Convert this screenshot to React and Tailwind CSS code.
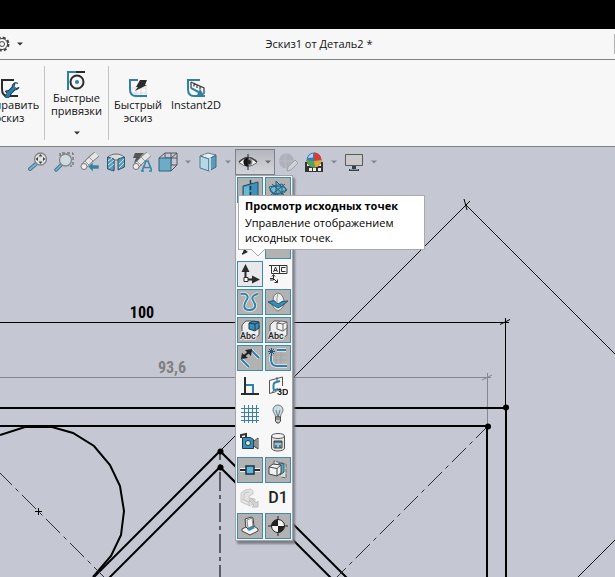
import clsx from 'clsx'

const BLUE = '#2f7fa6'
const DARK = '#2b2b2b'

function Icon({ children, className }) {
  return (
    <svg
      viewBox="0 0 20 20"
      aria-hidden="true"
      className={clsx('h-5 w-5 shrink-0', className)}
      fill="none"
    >
      {children}
    </svg>
  )
}

function Caret({ className }) {
  return (
    <svg viewBox="0 0 8 8" aria-hidden="true" className={clsx('h-2 w-2 shrink-0', className)}>
      <path d="M1 2.5h6L4 5.5z" fill="currentColor" />
    </svg>
  )
}

/* ---------- ribbon ---------- */

const RepairIcon = () => (
  <Icon>
    <path d="M14 2H2v9c0 5 2 7 6 7h10" stroke={DARK} strokeWidth="2" />
    <path d="M8 16l6-6" stroke="#16384c" strokeWidth="5" />
    <path d="M18 5.5a3.5 3.5 0 1 0 1 4l-3 1-2-2 1-3" fill={BLUE} stroke="#16384c" />
    <path d="M4 17.5a3.5 3.5 0 1 0 1-4l2 1v2l-2 1z" fill={BLUE} stroke="#16384c" />
    <path d="M7 17l8-8" stroke={BLUE} strokeWidth="3" />
  </Icon>
)

const SnapsIcon = () => (
  <Icon>
    <path d="M1 19V1M0 1h18" stroke={BLUE} strokeWidth="2" />
    <path d="M9 1h9" stroke={DARK} strokeWidth="2" />
    <circle cx="10" cy="11" r="6.5" stroke={DARK} strokeWidth="2" />
    <circle cx="10" cy="11" r="2" fill={BLUE} />
  </Icon>
)

const RapidIcon = () => (
  <Icon>
    <path d="M8 8v12M13 8v12M18 8v12M3 10h16M3 15h16" stroke="#dcdcdc" />
    <path d="M10 2H2v9c0 5 2 7 6 7h11" stroke={BLUE} strokeWidth="2" />
    <path d="M12 2h7l-2 5h2L7 13l3-4H8z" fill={DARK} />
  </Icon>
)

const Instant2DIcon = () => (
  <Icon>
    <path d="M14 2H2v9c0 5 2 7 6 7h11" stroke={BLUE} strokeWidth="2" />
    <path d="M5 4l13 6v6M5 4v6l4 2M8 5.5v3M11 7v3M14 8.5v3" stroke="#444" strokeWidth="1.3" />
    <path d="M5 9l8 4 1-2 4 6h-7l1-2-7-4z" fill={BLUE} />
  </Icon>
)

/* ---------- view toolbar ---------- */

const ZoomFitIcon = () => (
  <Icon>
    <path d="M2 17l7-6" stroke="#3f7897" strokeWidth="4" strokeLinecap="round" />
    <path d="M2 17l6-5" stroke="#7fb3cc" strokeWidth="2" strokeLinecap="round" />
    <circle cx="12.5" cy="7" r="6" fill="#dfe1e6" stroke="#858585" strokeWidth="1.3" />
    <path d="M12.5 2l2 2.5h-4zM12.5 12l2-2.5h-4zM7.5 7l2.5-2v4zM17.5 7L15 5v4z" fill="#444" />
  </Icon>
)

const ZoomAreaIcon = () => (
  <Icon>
    <path d="M6 4V1h13v13h-3" stroke="#555" strokeDasharray="3 2" />
    <path d="M2 18l6-6" stroke="#3f7897" strokeWidth="3.5" strokeLinecap="round" />
    <path d="M2 18l5-5" stroke="#7fb3cc" strokeWidth="1.5" strokeLinecap="round" />
    <circle cx="11.5" cy="8" r="6" fill="#cfdbe1" stroke="#858585" strokeWidth="1.3" />
  </Icon>
)

const Scope = () => (
  <>
    <path d="M4 14l7-7 6-5" stroke="#777" strokeWidth="6.5" />
    <path d="M4 14l7-7 6-5" stroke="#e6e6e6" strokeWidth="5" />
    <path d="M5 9l5 5M9 5l5 5" stroke="#9a9a9a" />
    <circle cx="4" cy="14.5" r="3" fill="#eee" stroke="#777" />
  </>
)

const PreviousViewIcon = () => (
  <Icon>
    <Scope />
    <path d="M8 14.5l5-4.500v3h6v4h-6v3z" fill="#37819f" stroke="#c5c8d3" strokeWidth=".6" />
  </Icon>
)

const SectionIcon = () => (
  <Icon>
    <path d="M2 5c4-4 12-4 16 0v9l-4 2V8H8v10l-6-2z" fill="#dadada" stroke="#6c6c6c" />
    <path d="M1.5 5L8 7v12l-6.5-2zM12 7l6.500-2v10L12 18z" fill="#5a9bba" stroke="#2c5b74" />
    <path d="M2 9l4-3M2 13l6-5M3 16l5-4M13 12l5-5M13 16l5-5" stroke="#cfe4ee" />
  </Icon>
)

const DynamicViewIcon = () => (
  <Icon>
    <path d="M3 1h9L8 5h3L2 11l2-5H1z" fill="#555" />
    <Scope />
    <path d="M10 19l4-10h2l4 10M12 15.5h6M9 19h3M17 19h3" stroke="#3d86aa" strokeWidth="1.7" />
  </Icon>
)

const OrientationIcon = () => (
  <Icon>
    <path d="M1 6l6-5h12v12l-6 6M7 1v12M7 6h12M13 1v12M1 19l6-6h12M13 6l6-5" stroke="#555" />
    <path d="M1 6h12v13H1z" fill="#6eabc7" stroke="#2f627c" />
  </Icon>
)

const DisplayStyleIcon = () => (
  <Icon>
    <path d="M2 4l8-3 8 2-7 4z" fill="#e9f1f5" stroke="#64798a" />
    <path d="M2 4l9 3v12l-9-3z" fill="#b4d8e7" stroke="#54788c" />
    <path d="M11 7l7-4v12l-7 4z" fill="#599cba" stroke="#3c6a81" />
    <path d="M6 3l6 3v13" stroke="#dceaf1" strokeWidth="1.5" />
  </Icon>
)

const EyeIcon = () => (
  <Icon>
    <path d="M1 10.5Q10 1 19 10.5 10 18 1 10.5z" fill="#f3f3f3" stroke="#666" />
    <path d="M1 10Q10 1 19 10" stroke="#444" strokeWidth="1.6" />
    <circle cx="10" cy="10" r="4.5" fill="#858585" />
    <path d="M10 5.5a4.5 4.5 0 0 0 0 9z" fill="#151515" />
    <circle cx="11" cy="10" r="2" fill="#222" />
    <path d="M10 2v16" stroke="#222" />
  </Icon>
)

const EditAppearanceIcon = () => (
  <Icon>
    <circle cx="8.5" cy="9" r="7.5" fill="#aeb1b8" />
    <path d="M1 9h15M8.5 1.5Q5 9 8.5 16.5" stroke="#bcbec5" />
    <path d="M9 19l1-4 7-7 3 3-7 7z" fill="#cfd1d6" stroke="#a0a2a8" />
  </Icon>
)

const SceneIcon = () => (
  <Icon>
    <path d="M1 10h18v10H1z" fill="#333" />
    <path d="M3 12h3v2H3zM9 16h3v3H9zM14 12h3v2h-3zM5 16h3v3H5zM14 16h3v3h-3z" fill="#eee" />
    <circle cx="10" cy="8" r="7.5" fill="#3f78bb" />
    <path d="M10 .5A7.5 7.5 0 0 1 17.500 8L10 9z" fill="#cf3f35" />
    <path d="M10 9L2.5 8a7.5 7.5 0 0 0 8.500 7.400z" fill="#54a54e" />
    <path d="M10 9l7.500-1a7.5 7.5 0 0 1-6.500 7.400z" fill="#d9a73b" />
    <path d="M4 6a7 7 0 0 1 5-4.500v4z" fill="#b5d6e8" />
  </Icon>
)

const MonitorIcon = () => (
  <Icon>
    <path d="M1.5 2.5h17v11h-17z" fill="#cacaca" stroke="#595959" />
    <path d="M8 14h4v3h3v2H5v-2h3z" fill="#3f3f3f" />
    <path d="M6 17.5h8" stroke="#5c9dbd" />
  </Icon>
)

/* ---------- visibility menu ---------- */

const PlanesIcon = () => (
  <Icon>
    <path d="M3 6l15-4v15H3z" fill="#4192b8" stroke="#18516d" />
    <path d="M4 7l5-1v10H4z" fill="#6db6d4" />
    <path d="M10.500 0v19" stroke="#173848" strokeWidth="1.5" strokeDasharray="4 2" />
  </Icon>
)

const PlaneSetIcon = () => (
  <Icon>
    <path d="M1 7l13-3 5 6-13 5z" fill="#79bad3" stroke="#24617e" />
    <path d="M8 1l6 6v11l-6-5z" fill="#4c9abd" fillOpacity=".5" stroke="#24617e" />
    <ellipse cx="10" cy="10" rx="8" ry="4" stroke="#24617e" />
    <path d="M3 15L17 4M4 4l13 12" stroke="#24617e" />
  </Icon>
)

const AxesIcon = () => (
  <Icon>
    <path d="M2 18L18 2" stroke={DARK} />
    <path d="M2 19l2-6 4 3z" fill={DARK} />
  </Icon>
)

const OriginIcon = () => (
  <Icon>
    <path d="M5.5 6v8M8 15.500h5" stroke={DARK} strokeWidth="2" />
    <path d="M5.5 0l4 8h-8zM20 15.500l-8 4v-8z" fill={DARK} />
    <path d="M4 13.5h4v4H4z" fill="#fff" stroke={DARK} />
  </Icon>
)

const CoordIcon = () => (
  <Icon>
    <path d="M1 1.5h18v8H3.500v-8M11.500 1.500v8" stroke="#333" />
    <path d="M5.500 8l2-5 2 5M6 6.500h3M17.500 3.500h-4v4h4" stroke="#333" />
    <path d="M5.500 11v5H2M2 14.500h3.500l4 4M4 12.500l1.500-2 1.500 2M9.500 15.500v3h-3" stroke="#333" />
  </Icon>
)

const CURVE = 'M1 2c7-1 8 3 5 7-3 5-2 9 3 9s8-3 5-8c-3-4-2-7 4-8'

const CurveIcon = () => (
  <Icon>
    <path d={CURVE} stroke="#e6eef2" strokeWidth="3.5" />
    <path d={CURVE} stroke="#3880a4" strokeWidth="2" />
  </Icon>
)

const PartingIcon = () => (
  <Icon>
    <path d="M5 9q0-7 5-8 5 1 6 8v4q-2 4-6 6-4-2-6-6z" fill="#ececec" stroke="#777" />
    <path d="M0 10l6-1.500 4 3.500 4-2.500 6-.5-5 4-5 3-5-3z" fill="#3c8db3" stroke="#1e5875" />
    <path d="M10 1Q8.500 5 9 11" stroke="#999" />
  </Icon>
)

function AbcIcon({ accent }) {
  const edge = accent ? '#173f56' : '#666'
  return (
    <Icon>
      <path d="M2 11V5l4-4h5l8 4v10l-4 3" fill="#eee" stroke="#555" />
      <path d="M9 3l4-2 6 1v6l-4 3-6-2z" fill={accent ? '#3c8db3' : '#f2f2f2'} stroke={edge} />
      <path d="M9 3l6 1v6M15 4l4-2" stroke={edge} />
      <text
        x="0"
        y="19"
        fontSize="9"
        fontWeight="500"
        fontFamily="Roboto, sans-serif"
        fill="#222"
        stroke="#e6e6e6"
        strokeWidth="2"
        paintOrder="stroke"
      >
        Abc
      </text>
    </Icon>
  )
}

const DimensionIcon = () => (
  <Icon>
    <path d="M1 11l8 8M11 2l8 8" stroke="#e6eef2" strokeWidth="3.5" />
    <path d="M1 11l8 8M11 2l8 8" stroke={BLUE} strokeWidth="2" />
    <path d="M3 9l7-6" stroke="#222" strokeWidth="2" />
    <path d="M1 11l1-6 6 5zM12 1L5 2l6 6z" fill="#222" />
  </Icon>
)

const SketchIcon = () => (
  <Icon>
    <path d="M8 4v12M13 4v12M5 7h14M5 12h14" stroke="#a0a0a0" strokeWidth=".6" />
    <path d="M9 2h9M3 8v3c0 5 2 7 6 7h10" stroke="#e6eef2" strokeWidth="3.5" />
    <path d="M9 2h9M3 8v3c0 5 2 7 6 7h10" stroke={BLUE} strokeWidth="2" />
    <path d="M3.500 0v8M0 3.500h7M1 1l5 5M6 1L1 6" stroke="#1e5875" />
  </Icon>
)

const RelationIcon = () => (
  <Icon>
    <path d="M1 18h18M5 1v17" stroke={DARK} strokeWidth="2" />
    <path d="M6 9h7v8" stroke={BLUE} strokeWidth="2" />
  </Icon>
)

const Sketch3DIcon = () => (
  <Icon>
    <path d="M1.500 4.500L14.500 1v9M1.500 4.500v13l7-2" stroke="#555" />
    <path d="M9 1v4M4 17l2-3M12 12v4" stroke="#555" />
    <path d="M12 5L7 6.500q-1.500.5-1.500 3v3q0 2.500 5 .5" stroke={BLUE} strokeWidth="2" />
    <text x="9" y="19" fontSize="9" fontWeight="700" fontFamily="Liberation Sans, sans-serif" fill="#222">
      3D
    </text>
  </Icon>
)

const GridIcon = () => (
  <Icon>
    <path
      d="M4.500 1v18M8.500 1v18M12.500 1v18M16.500 1v18M1 4.500h18M1 8.500h18M1 12.500h18M1 16.500h18"
      stroke="#3880a4"
    />
  </Icon>
)

const BulbIcon = () => (
  <Icon>
    <path
      d="M10 1a5 5 0 0 0-5 5c0 3 2.500 3.500 2.500 7h5c0-3.500 2.500-4 2.500-7a5 5 0 0 0-5-5z"
      fill="#c6dde7"
      stroke="#737b80"
    />
    <path d="M8 6l2 7 2-7" stroke="#777" />
    <path d="M7.500 13h5v4l-1.500 2H9l-1.500-2z" fill="#cfcfcf" stroke="#444" />
    <path d="M7 15h6" stroke="#555" />
  </Icon>
)

const CameraIcon = () => (
  <Icon>
    <path d="M1 6V3l5-1v3" stroke="#333" strokeWidth="2" />
    <path d="M2.500 5.500h8l3 2v9h-11z" fill="#3c8db3" stroke="#173f56" />
    <circle cx="8" cy="11" r="2.5" fill="#d5ebf4" stroke="#173f56" />
    <path d="M14 9l4-3v11l-4-3z" fill="#ddd" stroke="#444" />
    <path d="M16 8v8" stroke="#444" />
  </Icon>
)

const TankIcon = () => (
  <Icon>
    <path d="M3.500 4v12c0 4 13 4 13 0V4" fill="#e2e2e2" stroke="#555" />
    <ellipse cx="10" cy="4" rx="6.5" ry="2.5" fill="#f2f2f2" stroke="#555" />
    <path d="M6 9h8v7H6z" fill="#8fc6dc" stroke="#444" />
    <path d="M6 10h8M8 16v-3M12 16v-3" stroke="#333" />
  </Icon>
)

const RouteIcon = () => (
  <Icon>
    <path d="M0 10h20" stroke="#eee" strokeWidth="4" />
    <path d="M0 10h20" stroke={DARK} strokeWidth="2" />
    <path d="M6 6h8v8H6z" fill="#64b4d8" stroke="#12394e" strokeWidth="1.5" />
  </Icon>
)

const CutPlaneIcon = () => (
  <Icon>
    <path d="M6 4V1l12 3v14l-5-1" fill="#ddd" stroke="#666" strokeDasharray="4 1" />
    <path d="M9 5l3-2 4 1v8l-4 3z" fill="#5aa6c6" stroke="#2a5c76" />
    <path d="M1 7l4-3 8 1v8l-4 3-8-2z" fill="#f2f2f2" stroke="#444" />
    <path d="M1 7l8 1.500V16M9 8.500L13 5" stroke="#444" />
  </Icon>
)

const GhostPartIcon = () => (
  <Icon>
    <path d="M1 5l4-3 6-1 2 2v3l-4 2v2l6 1v4l-5 3-9-4z" fill="#e2e2e2" stroke="#c8c8c8" />
    <path d="M4 5l5-1M4 5v6M2 11l7 3 5-3M9 14v4" stroke="#c4c4c4" />
    <path d="M11 10l5 5 2-2v6h-6l2-2-5-5z" fill="#d5d5d5" stroke="#bbb" />
  </Icon>
)

const DimNameIcon = () => (
  <span className="font-['Roboto','Liberation_Sans',sans-serif] text-base leading-5 font-medium text-[#222]">
    D1
  </span>
)

const BracketIcon = () => (
  <Icon>
    <path d="M5 3l6-2 2 1 1 9-6 3-2-1z" fill="#e4e4e4" stroke="#444" />
    <path d="M7 4l5-2 1 8-5 2z" fill="#f6f6f6" stroke="#888" />
    <path d="M2 13l4-2 2 2 6-3 4 3v2l-8 4-8-4z" fill="#f4f4f4" stroke="#444" />
    <path d="M7 13l6-3 2 2-6 3z" fill="#3c8db3" />
  </Icon>
)

const MassCenterIcon = () => (
  <Icon>
    <path d="M10 0v20M0 10h20" stroke="#222" />
    <circle cx="10" cy="10" r="6.5" fill="#f4f4f4" stroke="#222" />
    <path d="M10 10V3.500A6.500 6.500 0 0 0 3.500 10zM10 10v6.500A6.500 6.500 0 0 0 16.500 10z" fill="#222" />
  </Icon>
)

const MENU = [
  { label: 'Плоскости', icon: PlanesIcon, on: true },
  { label: 'Основные плоскости', icon: PlaneSetIcon, on: true },
  { label: 'Оси', icon: AxesIcon },
  { label: 'Временные оси', icon: AxesIcon, on: true },
  { label: 'Вспомогательные оси', icon: AxesIcon },
  { label: 'Точки', icon: null, on: true },
  { label: 'Исходные точки', icon: OriginIcon, hover: true },
  { label: 'Системы координат', icon: CoordIcon },
  { label: 'Кривые', icon: CurveIcon, on: true },
  { label: 'Линии разъема', icon: PartingIcon, on: true },
  { label: 'Все примечания', icon: () => <AbcIcon accent />, on: true },
  { label: 'Примечания верхнего уровня', icon: () => <AbcIcon />, on: true },
  { label: 'Размеры эскиза', icon: DimensionIcon, on: true },
  { label: 'Эскизы', icon: SketchIcon, on: true },
  { label: 'Взаимосвязи эскиза', icon: RelationIcon },
  { label: 'Плоскости трехмерного эскиза', icon: Sketch3DIcon },
  { label: 'Сетка', icon: GridIcon },
  { label: 'Источники света', icon: BulbIcon },
  { label: 'Камеры', icon: CameraIcon },
  { label: 'Наклейки', icon: TankIcon },
  { label: 'Точки маршрута', icon: RouteIcon, on: true },
  { label: 'Сечение', icon: CutPlaneIcon, on: true },
  { label: 'Детали', icon: GhostPartIcon },
  { label: 'Имена размеров', icon: DimNameIcon },
  { label: 'Сварные швы', icon: BracketIcon, on: true },
  { label: 'Центр масс', icon: MassCenterIcon, on: true },
]

function VisibilityMenu() {
  return (
    <div className="absolute top-full left-0 z-10 grid w-max grid-cols-2 gap-0.5 border border-[#a3a3a8] bg-[#f7f7f7] p-px shadow-[2px_3px_2px_#7c7f88]">
      {MENU.map(({ label, icon: Glyph, on, hover }) => (
        <button
          key={label}
          type="button"
          aria-label={label}
          aria-pressed={!!on}
          className={clsx(
            'flex h-[26px] w-[26px] items-center justify-center border',
            on && 'border-[#3f8ab3] bg-[#b2b2b2]',
            hover && 'border-[#3f8ab3] bg-[#e8e8ea]',
            !on && !hover && 'border-transparent',
          )}
        >
          {Glyph && <Glyph />}
        </button>
      ))}
      <div
        role="tooltip"
        className="absolute top-[19px] left-0.5 w-[187px] border border-[#a9a9ad] bg-white px-1.5 pt-0.5 pb-1 text-[11px] leading-[15px] text-black"
      >
        <p className="mb-0.5 whitespace-nowrap font-bold">Просмотр исходных точек</p>
        <p>
          Управление отображением
          <br />
          исходных точек.
        </p>
        <svg viewBox="0 0 14 8" aria-hidden="true" className="absolute top-full left-3 h-2 w-3.5">
          <path d="M0 0l7 7 7-7" fill="#fff" stroke="#a9a9ad" />
        </svg>
      </div>
    </div>
  )
}

function RibbonButton({ icon: Glyph, children, caret, className }) {
  return (
    <button
      type="button"
      className={clsx('flex shrink-0 flex-col items-center text-center text-[11px] leading-[13px]', className)}
    >
      <Glyph />
      <span>{children}</span>
      {caret && <Caret className="mt-3 text-[#333]" />}
    </button>
  )
}

function ToolButton({ icon: Glyph, label }) {
  return (
    <button type="button" aria-label={label} className="shrink-0">
      <Glyph />
    </button>
  )
}

function Sketch() {
  return (
    <svg aria-hidden="true" className="absolute inset-0 h-full w-full" fill="none">
      {/* coordinates are in window space, the header above is 147px high */}
      <g transform="translate(0 -147)" stroke="#000">
        <path d="M466 205L220 451M466 205L1066 805M578 577L1000 155" stroke="#111" />
        <path d="M464 199l3 11M470 201l-8 8" />
        <path d="M0 322.500H509M505.500 318V407" />
        <path d="M500 324.500l10-5" />
        <g stroke="#86878a">
          <path d="M0 377.500H491M487.500 373V427" />
          <path d="M482 380l10-5" />
        </g>
        <g strokeWidth="2">
          <path d="M0 408H506V1200M0 426H487V1200" />
          <path d="M-400 1071L220 451 900 1131M-400 1087L220 467 900 1147" />
          <path d="M0 435L25 427H52L73 433 94 446 110 465 120 486 124 511 121 535 111 556 93 577" />
          <path d="M220 451V1200" stroke="#5b5d64" strokeDasharray="19 4 4 4" strokeDashoffset="10" />
        </g>
        <path d="M0 473L130 603M488 426L300 614" stroke="#2e2f33" strokeDasharray="20 5 4 5" strokeDashoffset="3" />
        <path d="M35 511.500h7M38.500 508v7" />
        <g fill="#000" stroke="none">
          <circle cx="506" cy="407.5" r="3" />
          <circle cx="488" cy="426.5" r="3" />
          <circle cx="220.5" cy="451.5" r="3" />
          <circle cx="220.5" cy="467.5" r="3" />
        </g>
        <g
          stroke="none"
          fontFamily="Roboto Condensed, Roboto, sans-serif"
          fontSize="16"
          fontWeight="700"
          textAnchor="middle"
        >
          <text x="142" y="318" fill="#000">100</text>
          <text x="172" y="373" fill="#808080">93,6</text>
        </g>
      </g>
    </svg>
  )
}

export default function App() {
  return (
    <div className="flex min-h-screen flex-col overflow-hidden bg-[#c5c8d3] font-['Open_Sans',sans-serif] text-[#111]">
      <div className="h-[29px] bg-black" />

      <header className="flex h-[31px] items-center border-b border-[#7f8582] bg-[#f7f7f7] text-[11px]">
        <button type="button" aria-label="Настройки" className="flex w-6 shrink-0 items-center justify-end gap-1.5">
          <svg viewBox="0 0 16 16" aria-hidden="true" className="h-4 w-4 shrink-0" fill="none" stroke="#444">
            <circle cx="8" cy="8" r="6.5" strokeWidth="2" strokeDasharray="3 2.1" />
            <circle cx="8" cy="8" r="5.5" />
            <circle cx="8" cy="8" r="2.5" />
          </svg>
          <Caret className="text-[#333]" />
        </button>
        <h1 className="flex-1 text-center">Эскиз1 от Деталь2 *</h1>
        <div className="h-5 w-px bg-[#b5b5b5]" />
      </header>

      <nav className="flex h-[87px] overflow-hidden border-b border-[#7f8582] bg-[#f7f7f7]">
        <RibbonButton icon={RepairIcon} className="-ml-6 w-[68px] pt-[18px]">
          Исправить
          <br />
          эскиз
        </RibbonButton>
        <div className="my-1.5 w-px shrink-0 bg-[#c3c3c3]" />
        <RibbonButton icon={SnapsIcon} caret className="w-[63px] pt-[11px]">
          Быстрые
          <br />
          привязки
        </RibbonButton>
        <div className="my-1.5 w-px shrink-0 bg-[#c3c3c3]" />
        <RibbonButton icon={RapidIcon} className="w-[58px] pt-[18px]">
          Быстрый
          <br />
          эскиз
        </RibbonButton>
        <RibbonButton icon={Instant2DIcon} className="w-[58px] pt-[18px]">
          Instant2D
        </RibbonButton>
      </nav>

      <main className="relative flex-1 overflow-hidden">
        <Sketch />
        <div className="relative flex items-center gap-[3px] pt-0.5 pl-7 text-[#85878e]">
          <div className="flex items-center gap-1.5">
            <ToolButton icon={ZoomFitIcon} label="Во весь экран" />
            <ToolButton icon={ZoomAreaIcon} label="Увеличить элемент вида" />
            <ToolButton icon={PreviousViewIcon} label="Предыдущий вид" />
            <ToolButton icon={SectionIcon} label="Разрез" />
            <ToolButton icon={DynamicViewIcon} label="Динамические виды примечаний" />
            <ToolButton icon={OrientationIcon} label="Ориентация вида" />
            <Caret />
            <ToolButton icon={DisplayStyleIcon} label="Стиль отображения" />
            <Caret />
          </div>
          <div className="relative">
            <button
              type="button"
              aria-label="Скрыть/показать объекты"
              aria-expanded="true"
              className="flex h-[26px] w-10 items-center justify-center gap-1.5 border border-[#7e8085] bg-linear-to-b from-[#b4b6bd] to-[#d3d5da]"
            >
              <EyeIcon />
              <Caret className="text-[#66686d]" />
            </button>
            <VisibilityMenu />
          </div>
          <div className="flex items-center gap-1.5">
            <ToolButton icon={EditAppearanceIcon} label="Редактировать внешний вид" />
            <ToolButton icon={SceneIcon} label="Применить сцену" />
            <Caret />
            <ToolButton icon={MonitorIcon} label="Настройки вида" />
            <Caret />
          </div>
        </div>
      </main>
    </div>
  )
}
